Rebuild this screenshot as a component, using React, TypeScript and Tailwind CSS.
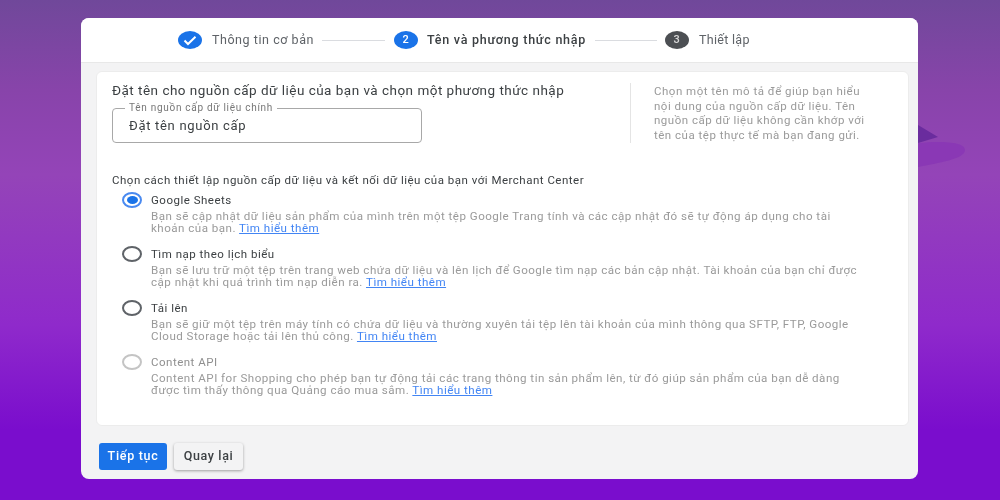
const font = { fontFamily: "Roboto, 'Noto Sans', sans-serif" };

function Link() {
  return <a className="text-[#4285f4] underline">Tìm hiểu thêm</a>;
}

function Option({ title, lines, selected, disabled }: { title: string; lines: [string, string]; selected?: boolean; disabled?: boolean }) {
  return (
    <div className="flex h-[54px] pl-[10px]">
      <div className="w-[29px] pt-[2px]">
        {selected ? (
          <div className="flex h-[16px] w-[20px] items-center justify-center rounded-[50%] border-2 border-[#4a8af0]">
            <div className="h-[8px] w-[11px] rounded-[50%] bg-[#1a73e8]" />
          </div>
        ) : (
          <div className={`h-[16px] w-[20px] rounded-[50%] border-2 ${disabled ? "border-[#c4c4c4]" : "border-[#5f6368]"}`} />
        )}
      </div>
      <div>
        <div className={`h-[20px] pt-[1px] text-[11.5px] leading-[18px] tracking-[0.5px] ${disabled ? "text-[#8f8f8f]" : "text-[#3c4043]"}`}>{title}</div>
        <div className="whitespace-nowrap text-[11.6px] leading-[12px] tracking-[0.47px] text-[#9a9a9a]">
          <div>{lines[0]}</div>
          <div>
            {lines[1]} <Link />
          </div>
        </div>
      </div>
    </div>
  );
}

export default function App() {
  return (
    <div className="h-[500px] w-[1000px] overflow-hidden bg-[linear-gradient(180deg,#70489a_0%,#8844aa_18%,#9444b8_35%,#8f2acb_65%,#7a0dcd_86%,#7a0dcd_100%)] pl-[81px] pt-[18px]" style={font}>
      <div className="relative h-0 w-0">
        <svg className="absolute left-[837px] top-[83px]" width="82" height="70" viewBox="0 0 82 70">
          <path d="M0 24 L20 36 L0 42 Z" fill="#6a2c9e" />
          <path d="M0 42 C20 40 47 40 47 49 C47 58 20 62 0 66 Z" fill="#8a38b5" />
        </svg>
      </div>
      <div className="flex h-[461px] w-[837px] flex-col overflow-hidden rounded-[8px] bg-[#f3f3f4] blur-[0.35px]">
        <div className="flex h-[45px] shrink-0 items-center border-b border-[#e8e8e8] bg-white pl-[97px] text-[12.5px] tracking-[0.55px]">
          <div className="flex h-[18px] w-[24px] items-center justify-center rounded-[50%] bg-[#1a73e8]">
            <svg width="14" height="11" viewBox="0 0 14 11"><path d="M1.5 5.5 L5 9 L12.5 1.8" fill="none" stroke="#fff" strokeWidth="2" /></svg>
          </div>
          <span className="ml-[10px] w-[103px] whitespace-nowrap text-[#5f6368]">Thông tin cơ bản</span>
          <div className="ml-[7px] h-px w-[63px] bg-[#dadce0]" />
          <div className="ml-[9px] flex h-[18px] w-[24px] items-center justify-center rounded-[50%] bg-[#1a73e8] text-[11px] font-medium text-white">2</div>
          <span className="ml-[9px] w-[161px] whitespace-nowrap font-medium tracking-[0.75px] text-[#3c4043]">Tên và phương thức nhập</span>
          <div className="ml-[7px] h-px w-[62px] bg-[#dadce0]" />
          <div className="ml-[8px] flex h-[18px] w-[24px] items-center justify-center rounded-[50%] bg-[#4c4f53] text-[11px] font-medium text-[#d8d8d8]">3</div>
          <span className="ml-[10px] whitespace-nowrap tracking-[0.3px] text-[#5f6368]">Thiết lập</span>
        </div>

        <div className="ml-[15px] mt-[8px] h-[355px] w-[813px] shrink-0 rounded-[6px] border border-[#ececec] bg-white pl-[15px]">
          <div className="flex h-[84px]">
            <div className="w-[518px]">
              <div className="pt-[9px] text-[13.5px] leading-[18px] tracking-[0.48px] whitespace-nowrap text-[#3c4043]">Đặt tên cho nguồn cấp dữ liệu của bạn và chọn một phương thức nhập</div>
              <div className="relative mt-[9px] flex h-[35px] w-[310px] items-center rounded-[4px] border border-[#a8a8a8] pl-[16px] text-[13px] tracking-[0.7px] text-[#3c4043]">
                <span className="absolute left-[12px] top-[-7px] bg-white px-[4px] text-[10px] leading-[12px] tracking-[0.72px] text-[#777]">Tên nguồn cấp dữ liệu chính</span>
                Đặt tên nguồn cấp
              </div>
            </div>
            <div className="mt-[11px] h-[60px] w-px bg-[#e4e4e4]" />
            <div className="ml-[23px] mt-[12px] text-[11.5px] leading-[14.7px] tracking-[0.5px] whitespace-nowrap text-[#9a9a9a]">
              <div>Chọn một tên mô tả để giúp bạn hiểu</div>
              <div>nội dung của nguồn cấp dữ liệu. Tên</div>
              <div>nguồn cấp dữ liệu không cần khớp với</div>
              <div>tên của tệp thực tế mà bạn đang gửi.</div>
            </div>
          </div>
          <div className="mt-[16px] text-[11.5px] leading-[16px] tracking-[0.5px] whitespace-nowrap text-[#3c4043]">Chọn cách thiết lập nguồn cấp dữ liệu và kết nối dữ liệu của bạn với Merchant Center</div>
          <div className="mt-[2px]">
            <Option selected title="Google Sheets" lines={["Bạn sẽ cập nhật dữ liệu sản phẩm của mình trên một tệp Google Trang tính và các cập nhật đó sẽ tự động áp dụng cho tài", "khoản của bạn."]} />
            <Option title="Tìm nạp theo lịch biểu" lines={["Bạn sẽ lưu trữ một tệp trên trang web chứa dữ liệu và lên lịch để Google tìm nạp các bản cập nhật. Tài khoản của bạn chỉ được", "cập nhật khi quá trình tìm nạp diễn ra."]} />
            <Option title="Tải lên" lines={["Bạn sẽ giữ một tệp trên máy tính có chứa dữ liệu và thường xuyên tải tệp lên tài khoản của mình thông qua SFTP, FTP, Google", "Cloud Storage hoặc tải lên thủ công."]} />
            <Option disabled title="Content API" lines={["Content API for Shopping cho phép bạn tự động tải các trang thông tin sản phẩm lên, từ đó giúp sản phẩm của bạn dễ dàng", "được tìm thấy thông qua Quảng cáo mua sắm."]} />
          </div>
        </div>

        <div className="flex gap-[7px] pl-[18px] pt-[17px]">
          <button className="flex h-[27px] w-[68px] items-center justify-center rounded-[3px] bg-[#1a73e8] text-[12.5px] font-medium tracking-[0.7px] text-white">Tiếp tục</button>
          <button className="flex h-[27px] w-[69px] items-center justify-center rounded-[3px] bg-[#f3f3f4] text-[12.5px] font-medium tracking-[0.65px] text-[#3c4043] shadow-[0_1px_3px_rgba(0,0,0,0.35)]">Quay lại</button>
        </div>
      </div>
    </div>
  );
}
